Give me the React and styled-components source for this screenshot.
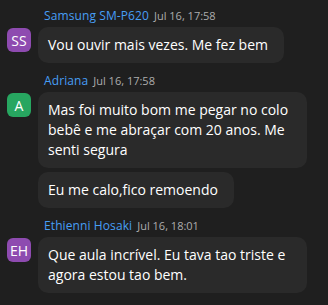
import React from 'react'
import styled, { createGlobalStyle } from 'styled-components'

const GlobalStyle = createGlobalStyle`
    html, body {
        margin: 0;
        padding: 0;
        background-color: #1f1f1f;
    }
    body {
        font-family: "Segoe UI", "Open Sans", "Noto Sans", sans-serif;
    }
`

const Feed = styled.div`
    width: 328px;
    height: 305px;
    background-color: #1f1f1f;
    display: flex;
    flex-direction: column;
    gap: 10px;
    padding: 8px 21px 0 7px;
    box-sizing: border-box;
    overflow: hidden;
`
const Group = styled.div`
    display: flex;
    flex-direction: column;
`
const Header = styled.div`
    display: flex;
    align-items: baseline;
    gap: 5px;
    margin-left: 37px;
    margin-bottom: 3px;
    line-height: 16px;
`
const Name = styled.span`
    color: #479ef5;
    font-size: 12px;
    letter-spacing: 0.1px;
`
const Time = styled.span`
    color: #adadad;
    font-size: 11px;
`
const Row = styled.div`
    display: flex;
    align-items: flex-start;
    gap: 7px;
`
const Avatar = styled.div`
    flex: none;
    width: 24px;
    height: 24px;
    margin-top: 1px;
    border-radius: 6px;
    background-color: ${p => p.$color};
    color: #ffffff;
    font-size: 14px;
    display: flex;
    align-items: center;
    justify-content: center;
`
const Bubbles = styled.div`
    display: flex;
    flex-direction: column;
    align-items: flex-start;
    gap: 4px;
    min-width: 0;
`
const Bubble = styled.div`
    background-color: #2a2a2a;
    color: #ffffff;
    border-radius: 10px;
    padding: 8px 16px 8px 10px;
    font-size: 14px;
    line-height: 20px;
`

const messages = [
    {
        id: 1,
        name: 'Samsung SM-P620',
        time: 'Jul 16, 17:58',
        initials: 'SS',
        color: '#8e4bb0',
        texts: ['Vou ouvir mais vezes. Me fez bem']
    },
    {
        id: 2,
        name: 'Adriana',
        time: 'Jul 16, 17:58',
        initials: 'A',
        color: '#27a660',
        texts: [
            'Mas foi muito bom me pegar no colo bebê e me abraçar com 20 anos. Me senti segura',
            'Eu me calo,fico remoendo'
        ]
    },
    {
        id: 3,
        name: 'Ethienni Hosaki',
        time: 'Jul 16, 18:01',
        initials: 'EH',
        color: '#8e4bb0',
        texts: ['Que aula incrível. Eu tava tao triste e agora estou tao bem.']
    }
]

const App = () => {
  return (
    <>
      <GlobalStyle />
      <Feed>
        {messages.map(msg => (
            <Group key={msg.id}>
                <Header>
                    <Name>{msg.name}</Name>
                    <Time>{msg.time}</Time>
                </Header>
                <Row>
                    <Avatar $color={msg.color}>{msg.initials}</Avatar>
                    <Bubbles>
                        {msg.texts.map((text, i) => (
                            <Bubble key={i}>{text}</Bubble>
                        ))}
                    </Bubbles>
                </Row>
            </Group>
        ))}
      </Feed>
    </>
  )
}

export default App
